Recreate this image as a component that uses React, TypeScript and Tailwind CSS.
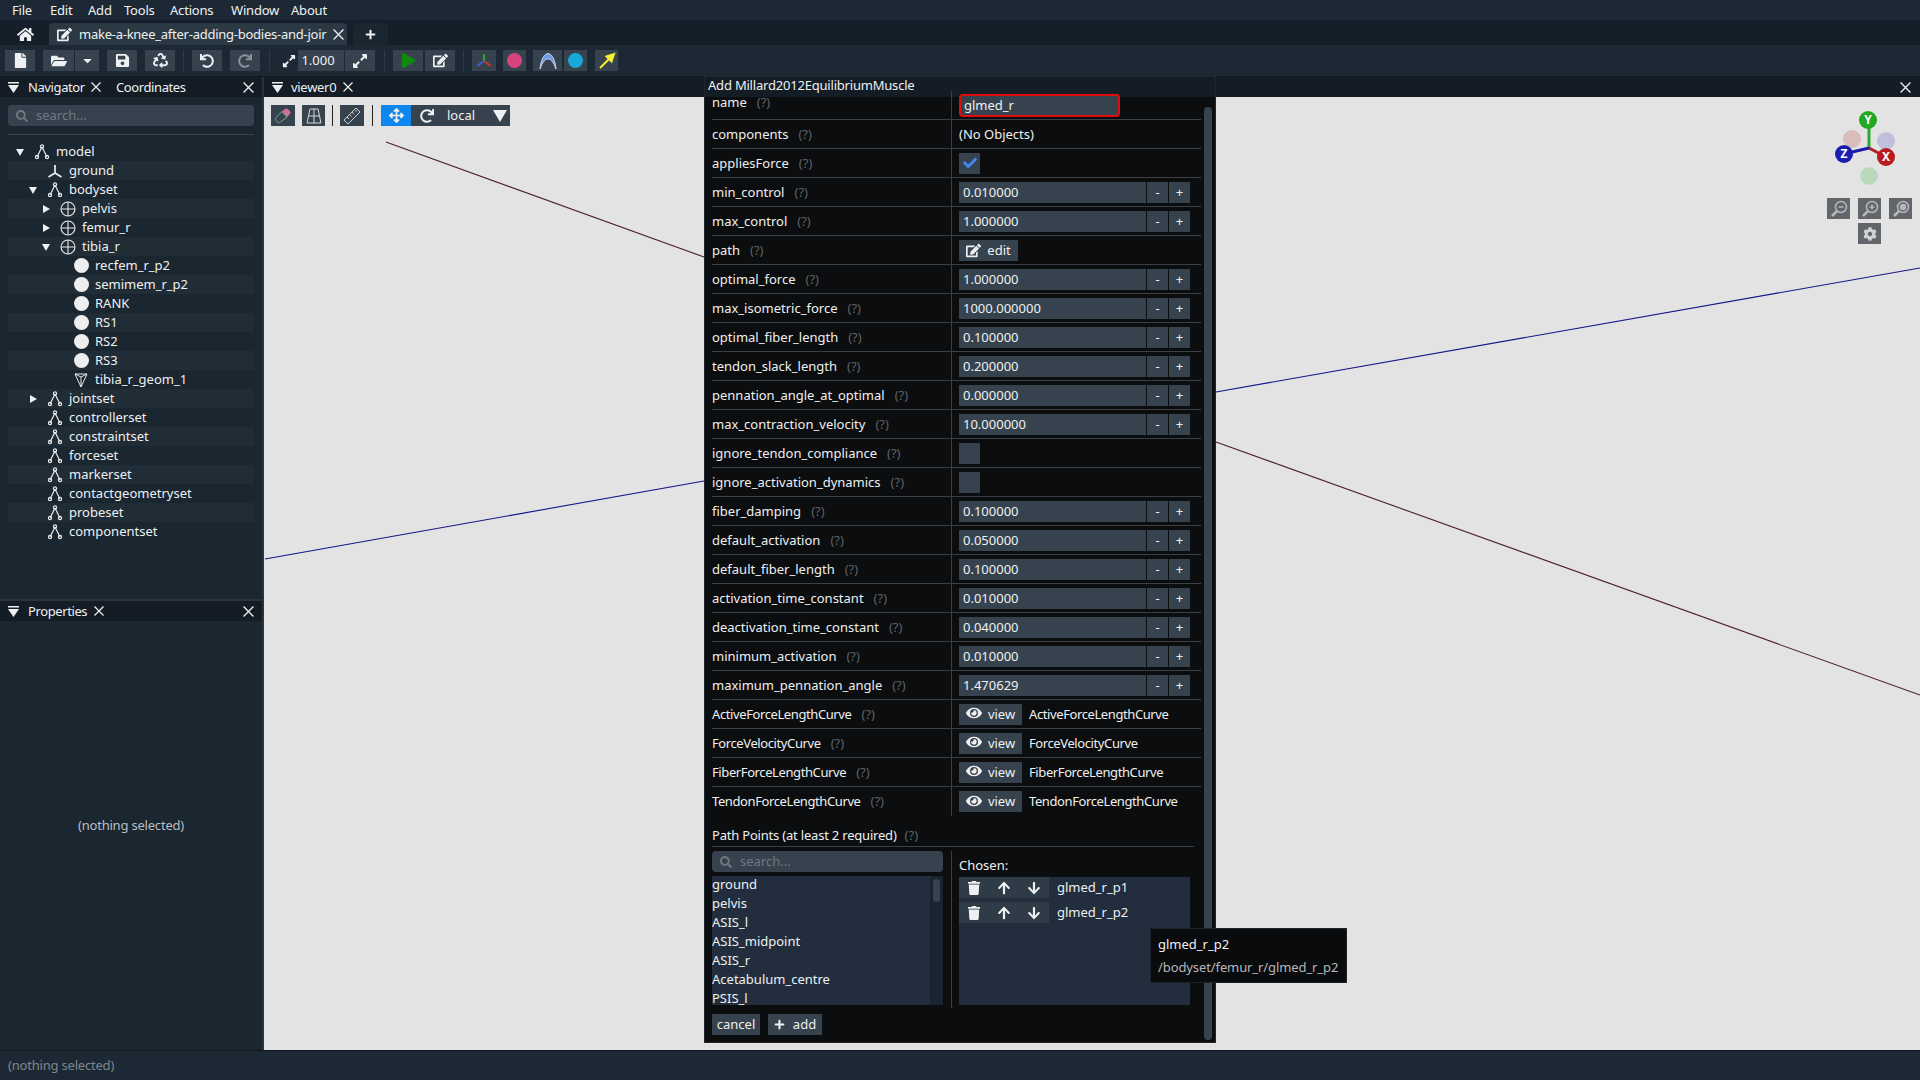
import type { ReactNode } from 'react'
import {
  FaArrowDown, FaArrowUp, FaArrowsAlt, FaCaretDown, FaCheck, FaCog, FaEdit, FaEye, FaFile,
  FaFolderOpen, FaHome, FaPlay, FaPlus, FaRecycle, FaRedo, FaSave, FaSearch,
  FaTrash, FaUndo, FaExpandAlt,
} from 'react-icons/fa'

const SetIcon = () => (
  <svg width="16" height="16" viewBox="0 0 16 16" fill="none" stroke="#e8e8e8" strokeWidth="1.2">
    <path d="M8 3 3 13M8 3l5 10" />
    <circle cx="8" cy="2.5" r="1.6" />
    <circle cx="3" cy="13" r="1.6" />
    <circle cx="13" cy="13" r="1.6" />
  </svg>
)
const GroundIcon = () => (
  <svg width="16" height="16" viewBox="0 0 16 16" fill="none" stroke="#e8e8e8" strokeWidth="1.8">
    <path d="M8 2v8M8 10 1.5 14M8 10l6.500 4" />
  </svg>
)
const BodyIcon = () => (
  <svg width="16" height="16" viewBox="0 0 16 16" fill="none" stroke="#e8e8e8" strokeWidth="1.1">
    <circle cx="8" cy="8" r="7" />
    <path d="M1 8h14M8 1v14" />
  </svg>
)
const PointIcon = () => <div className="w-[15px] h-[15px] rounded-full bg-[#eeeeee]" />
const MeshIcon = () => (
  <svg width="16" height="16" viewBox="0 0 16 16" fill="none" stroke="#e8e8e8" strokeWidth="1.1">
    <path d="M2 2h12L8 15ZM2 2l6 3 6-3M8 5v10" strokeWidth="1" />
  </svg>
)

// thin close cross used on the dock tabs
const CloseX = ({ size = 10 }: { size?: number }) => (
  <svg width={size} height={size} viewBox="0 0 10 10" className="shrink-0" stroke="#eef0f2" strokeWidth="1.2">
    <path d="M.5.5l9 9M9.500.5l-9 9" />
  </svg>
)

// dock menu glyph: bar over a triangle
const DockIcon = () => (
  <svg width="11" height="11" viewBox="0 0 11 11" className="shrink-0" fill="#eef0f2">
    <path d="M0 0h11v1.500H0ZM0 3h11L5.500 11Z" />
  </svg>
)

const Arrow = ({ open }: { open: boolean }) => (
  <svg width="8" height="8" viewBox="0 0 8 8" fill="#eef0f2">
    <path d={open ? 'M0 1h8L4 8Z' : 'M1 0l7 4-7 4Z'} />
  </svg>
)

// magnifier on the camera buttons, handle at the bottom left
const Lens = ({ mark }: { mark: 'minus' | 'plus' | 'dot' }) => (
  <svg width="18" height="18" viewBox="0 0 18 18" fill="none" stroke="#b5b8ba" strokeWidth="1.500">
    <circle cx="11" cy="7" r="5.500" />
    <path d="M7 11 2 16" strokeWidth="2.500" />
    {mark === 'minus' && <path d="M8.500 7h5" />}
    {mark === 'plus' && <path d="M8.500 7h5M11 4.500v5" />}
    {mark === 'dot' && <circle cx="11" cy="7" r="2.500" fill="#b5b8ba" />}
  </svg>
)

type TreeRow = { label: string; depth: number; icon: ReactNode; arrow?: 'open' | 'closed' }

const tree: TreeRow[] = [
  { label: 'model', depth: 0, icon: <SetIcon />, arrow: 'open' },
  { label: 'ground', depth: 1, icon: <GroundIcon /> },
  { label: 'bodyset', depth: 1, icon: <SetIcon />, arrow: 'open' },
  { label: 'pelvis', depth: 2, icon: <BodyIcon />, arrow: 'closed' },
  { label: 'femur_r', depth: 2, icon: <BodyIcon />, arrow: 'closed' },
  { label: 'tibia_r', depth: 2, icon: <BodyIcon />, arrow: 'open' },
  { label: 'recfem_r_p2', depth: 3, icon: <PointIcon /> },
  { label: 'semimem_r_p2', depth: 3, icon: <PointIcon /> },
  { label: 'RANK', depth: 3, icon: <PointIcon /> },
  { label: 'RS1', depth: 3, icon: <PointIcon /> },
  { label: 'RS2', depth: 3, icon: <PointIcon /> },
  { label: 'RS3', depth: 3, icon: <PointIcon /> },
  { label: 'tibia_r_geom_1', depth: 3, icon: <MeshIcon /> },
  { label: 'jointset', depth: 1, icon: <SetIcon />, arrow: 'closed' },
  { label: 'controllerset', depth: 1, icon: <SetIcon /> },
  { label: 'constraintset', depth: 1, icon: <SetIcon /> },
  { label: 'forceset', depth: 1, icon: <SetIcon /> },
  { label: 'markerset', depth: 1, icon: <SetIcon /> },
  { label: 'contactgeometryset', depth: 1, icon: <SetIcon /> },
  { label: 'probeset', depth: 1, icon: <SetIcon /> },
  { label: 'componentset', depth: 1, icon: <SetIcon /> },
]

type Prop =
  | { name: string; kind: 'num'; value: string }
  | { name: string; kind: 'check'; on: boolean }
  | { name: string; kind: 'curve' }

const numProps: Prop[] = [
  { name: 'min_control', kind: 'num', value: '0.010000' },
  { name: 'max_control', kind: 'num', value: '1.000000' },
]
const moreProps: Prop[] = [
  { name: 'optimal_force', kind: 'num', value: '1.000000' },
  { name: 'max_isometric_force', kind: 'num', value: '1000.000000' },
  { name: 'optimal_fiber_length', kind: 'num', value: '0.100000' },
  { name: 'tendon_slack_length', kind: 'num', value: '0.200000' },
  { name: 'pennation_angle_at_optimal', kind: 'num', value: '0.000000' },
  { name: 'max_contraction_velocity', kind: 'num', value: '10.000000' },
  { name: 'ignore_tendon_compliance', kind: 'check', on: false },
  { name: 'ignore_activation_dynamics', kind: 'check', on: false },
  { name: 'fiber_damping', kind: 'num', value: '0.100000' },
  { name: 'default_activation', kind: 'num', value: '0.050000' },
  { name: 'default_fiber_length', kind: 'num', value: '0.100000' },
  { name: 'activation_time_constant', kind: 'num', value: '0.010000' },
  { name: 'deactivation_time_constant', kind: 'num', value: '0.040000' },
  { name: 'minimum_activation', kind: 'num', value: '0.010000' },
  { name: 'maximum_pennation_angle', kind: 'num', value: '1.470629' },
  { name: 'ActiveForceLengthCurve', kind: 'curve' },
  { name: 'ForceVelocityCurve', kind: 'curve' },
  { name: 'FiberForceLengthCurve', kind: 'curve' },
  { name: 'TendonForceLengthCurve', kind: 'curve' },
]

const Btn = ({ w = 'w-[30px]', bg = 'bg-[#36434e]', children, className = '' }: { w?: string; bg?: string; children: ReactNode; className?: string }) => (
  <div className={`${w} ${bg} h-[21px] flex items-center justify-center shrink-0 ${className}`}>{children}</div>
)

const Row = ({ name, children, last, labelClass = '', nameClass = '' }: { name: string; children: ReactNode; last?: boolean; labelClass?: string; nameClass?: string }) => (
  <div className={`flex h-[29px] shrink-0 items-center ${last ? '' : 'border-b border-[#3a3f45]'}`}>
    <div className={`w-[240px] h-full flex items-center gap-2.5 border-r border-[#3a3f45] ${labelClass}`}>
      <span className={nameClass}>{name}</span>
      <span className="text-[#5c6268]">(?)</span>
    </div>
    <div className="pl-[7px] flex items-center flex-1">{children}</div>
  </div>
)

const Prop = ({ p, last }: { p: Prop; last?: boolean }) => (
  <Row name={p.name} last={last} nameClass={p.kind === 'curve' ? 'tracking-[-0.4px]' : ''}>
    {p.kind === 'num' && (
      <>
        <div className="w-[187px] h-[21px] bg-[#36434e] px-1 flex items-center">{p.value}</div>
        <div className="ml-px w-[21px] h-[21px] bg-[#36434e] flex items-center justify-center">-</div>
        <div className="ml-px w-[21px] h-[21px] bg-[#36434e] flex items-center justify-center">+</div>
      </>
    )}
    {p.kind === 'check' && <div className="w-[21px] h-[21px] bg-[#36434e]" />}
    {p.kind === 'curve' && (
      <>
        <div className="w-[63px] h-[21px] bg-[#36434e] flex items-center justify-center gap-1.5">
          <FaEye size={16} color="#f0f0f0" className="-mt-0.5" />
          <span>view</span>
        </div>
        <span className="ml-[7px] tracking-[-0.4px]">{p.name}</span>
      </>
    )}
  </Row>
)

const menus = [
  { label: 'File', w: 'w-[38px]' },
  { label: 'Edit', w: 'w-[38px]' },
  { label: 'Add', w: 'w-[36px]' },
  { label: 'Tools', w: 'w-[46px]' },
  { label: 'Actions', w: 'w-[61px]' },
  { label: 'Window', w: 'w-[60px]' },
  { label: 'About', w: 'w-[50px]' },
]

const listItems = ['ground', 'pelvis', 'ASIS_l', 'ASIS_midpoint', 'ASIS_r', 'Acetabulum_centre', 'PSIS_l']

export default function App() {
  return (
    <div className="h-screen w-screen overflow-hidden flex flex-col bg-[#1a2630] text-[#eef0f2] text-[13px] leading-none [font-family:'Noto_Sans',sans-serif]">
      {/* Main menu */}
      <div className="h-[20px] pl-3 flex items-center bg-[#1c2934] shrink-0">
        {menus.map((m) => (
          <span key={m.label} className={`${m.w} tracking-[-0.2px]`}>{m.label}</span>
        ))}
      </div>

      {/* Tabs */}
      <div className="h-[25px] pt-[3px] pl-2 flex items-stretch bg-[#151f29] shrink-0">
        <div className="w-[35px] flex items-center justify-center">
          <FaHome size={17} />
        </div>
        <div className="ml-1.5 w-[298px] bg-[#2b3944] rounded-t flex items-center pl-2 pr-1 gap-[7px]">
          <FaEdit size={15} className="shrink-0" />
          <span className="flex-1 whitespace-nowrap tracking-[-0.25px]">make-a-knee_after-adding-bodies-and-joir</span>
          <CloseX size={11} />
        </div>
        <div className="ml-1.5 w-[35px] bg-[#1a2630] rounded-t flex items-center justify-center">
          <FaPlus size={11} />
        </div>
      </div>

      {/* Toolbar */}
      <div className="h-[32px] pl-[5px] flex items-center bg-[#1c2934] border-b border-[#10171e] shrink-0">
        <Btn><FaFile size={15} /></Btn>
        <Btn className="ml-2" w="w-[31px]"><FaFolderOpen size={16} /></Btn>
        <Btn className="ml-px" w="w-[24px]"><FaCaretDown size={13} /></Btn>
        <Btn className="ml-2"><FaSave size={15} /></Btn>
        <Btn className="ml-2"><FaRecycle size={15} /></Btn>
        <div className="w-px h-[21px] bg-[#2f3b46] ml-2 mr-2" />
        <Btn><FaUndo size={14} /></Btn>
        <Btn className="ml-2"><FaRedo size={14} color="#8a939b" /></Btn>
        <div className="w-px h-[21px] bg-[#2f3b46] ml-[9px] mr-[10px]" />
        <div className="w-[18px] flex justify-center"><FaExpandAlt size={14} /></div>
        <Btn w="w-[46px]" className="pr-1.5">1.000</Btn>
        <Btn className="ml-px"><FaExpandAlt size={16} /></Btn>
        <div className="w-px h-[21px] bg-[#2f3b46] ml-[9px] mr-2" />
        <Btn><FaPlay size={15} color="#0f8a0f" /></Btn>
        <Btn className="ml-0.5"><FaEdit size={15} /></Btn>
        <div className="w-px h-[21px] bg-[#2f3b46] ml-2 mr-2" />
        <Btn w="w-[24px]">
          <svg width="18" height="18" viewBox="0 0 18 18" fill="none" strokeWidth="2">
            <path d="M9 9V2" stroke="#2fa52f" />
            <path d="M9 9l7 5" stroke="#c0392b" />
            <path d="M9 9l-7 5" stroke="#3a5fd0" />
          </svg>
        </Btn>
        <Btn className="ml-[7px]" w="w-[23px]"><div className="w-[15px] h-[15px] rounded-full bg-[#d8447e]" /></Btn>
        <Btn className="ml-[7px]" w="w-[29px]">
          <svg width="20" height="18" viewBox="0 0 20 18" fill="none">
            <path d="M2 17C3 6 7 1.500 10 1.500S17 6 18 17C15 9 12.500 7 10 7S5 9 2 17Z" fill="#6f9be8" stroke="#dfe6f5" strokeWidth="0.8" />
          </svg>
        </Btn>
        <Btn className="ml-0.5" w="w-[23px]"><div className="w-[15px] h-[15px] rounded-full bg-[#1aa8d8]" /></Btn>
        <Btn className="ml-2" w="w-[23px]">
          <svg width="18" height="18" viewBox="0 0 18 18"><path d="M2 16 11 7 8.500 4.500 16 2l-2.500 7.500L11 7" fill="#f5f030" stroke="#f5f030" strokeWidth="2" /></svg>
        </Btn>
      </div>

      <div className="flex-1 flex min-h-0">
        {/* Left docks */}
        <div className="w-[262px] flex flex-col shrink-0">
          <div className="h-[524px] flex flex-col border-b-2 border-[#2a343d]">
            <div className="h-[20px] bg-[#141d26] flex items-center pl-2 pr-2">
              <DockIcon />
              <span className="ml-[9px] w-[63px] tracking-[-0.4px]">Navigator</span>
              <CloseX />
              <span className="ml-[15px] tracking-[-0.4px]">Coordinates</span>
              <span className="ml-auto"><CloseX size={11} /></span>
            </div>
            <div className="mx-2 mt-2 h-[21px] bg-[#36434e] rounded flex items-center px-2 gap-2 text-[#6f7880]">
              <FaSearch size={12} />
              <span>search...</span>
            </div>
            <div className="mx-2 mt-2 h-px bg-[#36424c]" />
            <div className="mx-2 mt-[7px]">
              {tree.map((r, i) => (
                <div key={r.label} className={`h-[19px] flex items-center ${i % 2 === 1 ? 'bg-[#202c36]' : ''}`}>
                  <div style={{ width: 8 + r.depth * 13 }} className="shrink-0" />
                  <div className="w-[8px] flex justify-center shrink-0">
                    {r.arrow && <Arrow open={r.arrow === 'open'} />}
                  </div>
                  <div className="w-[16px] ml-[10px] flex justify-center shrink-0">{r.icon}</div>
                  <span className="ml-[6px] whitespace-nowrap">{r.label}</span>
                </div>
              ))}
            </div>
          </div>
          <div className="flex-1 flex flex-col">
            <div className="h-[20px] bg-[#141d26] flex items-center pl-2 pr-2">
              <DockIcon />
              <span className="ml-[9px] tracking-[-0.4px]">Properties</span>
              <span className="ml-[7px]"><CloseX /></span>
              <span className="ml-auto"><CloseX size={11} /></span>
            </div>
            <div className="flex-1 flex items-center justify-center text-[#b9bec3] pb-[20px] tracking-[-0.2px]">(nothing selected)</div>
          </div>
        </div>
        <div className="w-[2px] bg-[#2a343d] shrink-0" />

        {/* Viewer */}
        <div className="flex-1 flex flex-col min-w-0">
          <div className="h-[20px] bg-[#141d26] flex items-center pl-2 pr-[9px] shrink-0">
            <DockIcon />
            <span className="ml-2 tracking-[-0.3px]">viewer0</span>
            <span className="ml-[7px]"><CloseX /></span>
            <span className="ml-auto"><CloseX size={11} /></span>
          </div>
          <div className="flex-1 relative bg-[#e3e3e3] overflow-hidden">
            <svg className="absolute inset-0" width="1656" height="952" fill="none" strokeWidth="1.1">
              <path d="M122 45 440 160" stroke="#4a1f2a" />
              <path d="M952 295 1656 171" stroke="#14178a" />
              <path d="M952 345 1656 598" stroke="#4a1f2a" />
              <path d="M1 462 440 384" stroke="#14178a" />
            </svg>
            <div className="relative pt-2 pl-[7px] flex items-center">
              <Btn w="w-[24px]">
                <svg width="18" height="18" viewBox="0 0 18 18" fill="none">
                  <path d="M9 3.500 12 1c1-.8 2-.8 3 .2l1.800 1.800c1 1 1 2 .2 3L14 9Z" fill="#d0709a" transform="translate(-1 1)" />
                  <path d="M8 4.500 2 10.500c-1 1-1 2 0 3l1.500 1.500c1 1 2 1 3 0L13 10Z" stroke="#7fa88f" strokeWidth="1" />
                </svg>
              </Btn>
              <Btn className="ml-[7px]" w="w-[23px]">
                <svg width="16" height="16" viewBox="0 0 16 16" fill="none" stroke="#d8d8d8" strokeWidth="1">
                  <path d="M4 1h8l3 14H1ZM2.500 8h11M8 1v14" />
                </svg>
              </Btn>
              <div className="w-px h-[21px] bg-[#222] mx-[7px]" />
              <Btn w="w-[24px]">
                <svg width="18" height="18" viewBox="0 0 18 18" fill="none" stroke="#cfcfcf" strokeWidth="1">
                  <path d="M1 13 13 1l4 4L5 17ZM4 10l2 2M6.500 7.500l2 2M9 5l2 2M11.500 2.500l2 2" />
                </svg>
              </Btn>
              <div className="w-px h-[21px] bg-[#222] mx-2" />
              <Btn bg="bg-[#0f86ee]"><FaArrowsAlt size={15} /></Btn>
              <div className="w-[99px] h-[21px] bg-[#36434e] flex items-center pl-[9px]">
                <FaRedo size={14} />
                <span className="ml-[13px]">local</span>
                <svg width="14" height="12" viewBox="0 0 14 12" fill="#eef0f2" className="ml-auto mr-[3px]">
                  <path d="M0 0h14L7 12Z" />
                </svg>
              </div>
            </div>

            {/* Camera gizmo */}
            <svg className="absolute top-0 left-[1556px]" width="100" height="110" viewBox="1820 98 100 110">
              <circle cx="1852" cy="140" r="9" fill="#d9bcbc" />
              <circle cx="1886" cy="142" r="9" fill="#c0c0dc" />
              <circle cx="1869" cy="177" r="9" fill="#bcd8bc" />
              <path d="M1869 149V121" stroke="#2fa52f" strokeWidth="3" />
              <path d="M1869 149 1886 158" stroke="#b02020" strokeWidth="3" />
              <path d="M1869 149 1844 155" stroke="#1c1caa" strokeWidth="3" />
              <circle cx="1868" cy="121" r="9" fill="#22a822" />
              <circle cx="1886" cy="158" r="9" fill="#b81c1c" />
              <circle cx="1844" cy="155" r="9" fill="#1c1cb0" />
              <g fill="#fff" fontSize="12" fontWeight="700" textAnchor="middle" fontFamily="Noto Sans">
                <text x="1868" y="125">Y</text>
                <text x="1886" y="162">X</text>
                <text x="1844" y="159">Z</text>
              </g>
            </svg>
            <div className="absolute top-[101px] right-[8px] w-[85px] flex flex-wrap gap-x-2 gap-y-1 justify-center">
              <Btn w="w-[23px]" bg="bg-[#62666a]"><Lens mark="minus" /></Btn>
              <Btn w="w-[23px]" bg="bg-[#62666a]"><Lens mark="plus" /></Btn>
              <Btn w="w-[23px]" bg="bg-[#62666a]"><Lens mark="dot" /></Btn>
              <Btn w="w-[23px]" bg="bg-[#62666a]"><FaCog size={14} color="#d0d2d4" /></Btn>
            </div>
          </div>
        </div>
      </div>

      {/* Status bar */}
      <div className="h-[30px] bg-[#1c2934] border-t border-[#10171e] flex items-center pl-2 text-[#7d868e] shrink-0 tracking-[-0.2px]">
        (nothing selected)
      </div>

      {/* Add muscle dialog */}
      <div className="absolute left-[704px] top-[76px] w-[512px] h-[967px] bg-[#0c0d0e] border border-[#20272e] flex flex-col overflow-hidden">
        <div className="h-[20px] bg-[#141d26] flex items-center pl-[3px] pb-[3px] shrink-0 tracking-[-0.2px]">Add Millard2012EquilibriumMuscle</div>
        <div className="flex-1 flex min-h-0">
          <div className="w-[496px] pl-[7px] flex flex-col">
            <div className="mt-[-6px]">
              <Row name="name" labelClass="pb-1.5">
                <div className="w-[161px] h-[23px] bg-[#36434e] border-2 border-[#e00d0d] rounded px-[3px] flex items-center">glmed_r</div>
              </Row>
              <Row name="components"><span>(No Objects)</span></Row>
              <Row name="appliesForce">
                <div className="w-[21px] h-[21px] bg-[#36434e] flex items-center justify-center">
                  <FaCheck size={14} color="#4287f5" />
                </div>
              </Row>
              {numProps.map((p) => <Prop key={p.name} p={p} />)}
              <Row name="path">
                <div className="w-[59px] h-[21px] bg-[#36434e] flex items-center justify-center gap-1.5">
                  <FaEdit size={15} />
                  <span>edit</span>
                </div>
              </Row>
              {moreProps.map((p, i) => <Prop key={p.name} p={p} last={i === moreProps.length - 1} />)}
            </div>

            <div className="mt-[11px] flex items-center gap-2 h-[16px]">
              <span className="tracking-[-0.2px]">Path Points (at least 2 required)</span>
              <span className="text-[#5c6268]">(?)</span>
            </div>
            <div className="mt-[3px] h-px w-[482px] bg-[#3a3f45]" />
            <div className="mt-[4px] flex h-[157px]">
              <div className="w-[231px] shrink-0">
                <div className="h-[21px] bg-[#36434e] rounded flex items-center px-2 gap-2 text-[#6f7880]">
                  <FaSearch size={12} />
                  <span>search...</span>
                </div>
                <div className="mt-1 h-[129px] bg-[#222e3d] flex overflow-hidden">
                  <div className="flex-1 pt-[2px] flex flex-col gap-[6px]">
                    {listItems.map((t) => (
                      <div key={t} className="h-[13px] flex items-center">{t}</div>
                    ))}
                  </div>
                  <div className="w-[13px] bg-[#1a2430] pt-[3px] px-[3px]">
                    <div className="h-[23px] bg-[#36434e] rounded" />
                  </div>
                </div>
              </div>
              <div className="ml-2 pl-[7px] w-[239px] shrink-0 border-l border-[#3a3f45]">
                <div className="h-[26px] flex items-end pb-[5px]">Chosen:</div>
                <div className="h-[128px] bg-[#222e3d]">
                  {['glmed_r_p1', 'glmed_r_p2'].map((t, i) => (
                    <div key={t} className={`flex items-center ${i ? 'mt-1' : ''}`}>
                      <div className="w-[30px] h-[21px] bg-[#2f3b47] flex items-center justify-center"><FaTrash size={14} /></div>
                      <div className="w-[30px] h-[21px] bg-[#2f3b47] flex items-center justify-center"><FaArrowUp size={14} /></div>
                      <div className="w-[30px] h-[21px] bg-[#2f3b47] flex items-center justify-center"><FaArrowDown size={14} /></div>
                      <span className="ml-2">{t}</span>
                    </div>
                  ))}
                </div>
              </div>
            </div>
            <div className="mt-[6px] flex gap-2">
              <Btn w="w-[48px]">cancel</Btn>
              <div className="w-[54px] h-[21px] bg-[#36434e] flex items-center justify-center gap-2">
                <FaPlus size={11} />
                <span>add</span>
              </div>
            </div>
          </div>
          <div className="ml-[3px] mt-[10px] mb-[2px] w-[8px] rounded bg-[#36434e]" />
        </div>
      </div>

      {/* Tooltip */}
      <div className="absolute left-[1150px] top-[928px] w-[197px] h-[55px] bg-[#0a0b0c] border border-[#1c2228] pl-[7px] flex flex-col justify-center gap-[10px]">
        <span>glmed_r_p2</span>
        <span className="text-[#b4b8bc] whitespace-nowrap tracking-[-0.1px]">/bodyset/femur_r/glmed_r_p2</span>
      </div>
    </div>
  )
}
